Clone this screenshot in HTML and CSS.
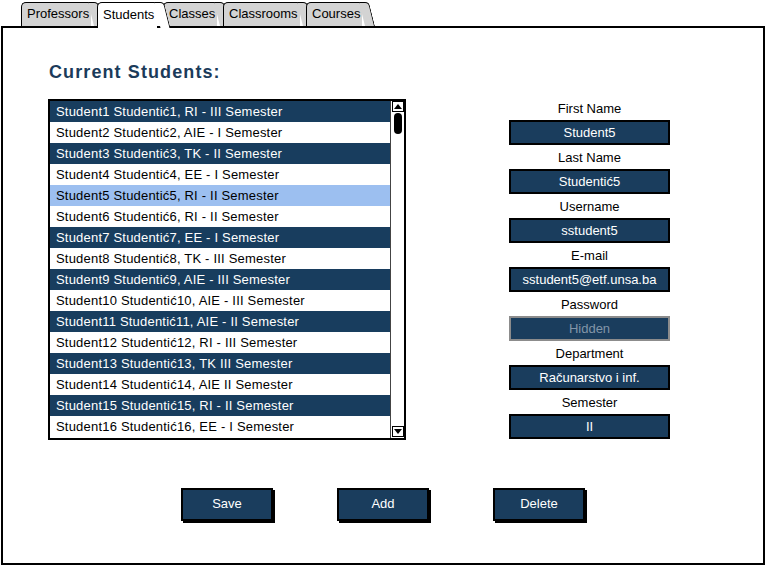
FILE: index.html
```html
<!DOCTYPE html>
<html>
<head>
<meta charset="utf-8">
<link rel="stylesheet" href="styles.css">
</head>
<body>
<div class="tabs">
  <div class="tab t-prof">Professors</div>
  <div class="tab active t-stud">Students</div>
  <div class="tab t-cls">Classes</div>
  <div class="tab t-room">Classrooms</div>
  <div class="tab t-crs">Courses</div>
</div>
<div class="panel">
  <h1 class="title">Current Students:</h1>
  <div class="main">
    <div class="list">
      <div class="rows">
        <div class="row dark">Student1 Studentić1, RI - III Semester</div>
        <div class="row">Student2 Studentić2, AIE - I Semester</div>
        <div class="row dark">Student3 Studentić3, TK - II Semester</div>
        <div class="row">Student4 Studentić4, EE - I Semester</div>
        <div class="row selected">Student5 Studentić5, RI - II Semester</div>
        <div class="row">Student6 Studentić6, RI - II Semester</div>
        <div class="row dark">Student7 Studentić7, EE - I Semester</div>
        <div class="row">Student8 Studentić8, TK - III Semester</div>
        <div class="row dark">Student9 Studentić9, AIE - III Semester</div>
        <div class="row">Student10 Studentić10, AIE - III Semester</div>
        <div class="row dark">Student11 Studentić11, AIE - II Semester</div>
        <div class="row">Student12 Studentić12, RI - III Semester</div>
        <div class="row dark">Student13 Studentić13, TK III Semester</div>
        <div class="row">Student14 Studentić14, AIE II Semester</div>
        <div class="row dark">Student15 Studentić15, RI - II Semester</div>
        <div class="row">Student16 Studentić16, EE - I Semester</div>
      </div>
      <div class="scrollbar">
        <div class="arrow up"></div>
        <div class="thumb"></div>
        <div class="track"></div>
        <div class="arrow down"></div>
      </div>
    </div>
    <div class="form">
      <div class="label">First Name</div>
      <div class="field">Student5</div>
      <div class="label">Last Name</div>
      <div class="field">Studentić5</div>
      <div class="label">Username</div>
      <div class="field">sstudent5</div>
      <div class="label">E-mail</div>
      <div class="field">sstudent5@etf.unsa.ba</div>
      <div class="label">Password</div>
      <div class="field disabled">Hidden</div>
      <div class="label">Department</div>
      <div class="field">Računarstvo i inf.</div>
      <div class="label">Semester</div>
      <div class="field">II</div>
    </div>
  </div>
  <div class="buttons">
    <div class="btn">Save</div>
    <div class="btn">Add</div>
    <div class="btn">Delete</div>
  </div>
</div>
</body>
</html>
```

FILE: styles.css
```css
* { box-sizing: border-box; }
html, body { margin: 0; padding: 0; background: #fff; }
body {
  font-family: "Liberation Sans", Arial, sans-serif;
  font-size: 13px;
  color: #000;
  width: 767px;
  height: 566px;
  overflow: hidden;
}

/* Tabs */
.tabs {
  display: flex;
  align-items: flex-start;
  height: 28px;
  padding: 2px 0 0 21px;
  margin-bottom: -2px;
  position: relative;
  z-index: 2;
}
.tab {
  position: relative;
  height: 24px;
  background: #d3d3d3;
  border-top: 1px solid #000;
  border-left: 1.5px solid #000;
  border-radius: 5px 0 0 0;
  padding: 3px 0 0 5px;
  line-height: 16px;
  white-space: nowrap;
}
.tab::after {
  content: "";
  position: absolute;
  top: -1px;
  bottom: 0;
  right: -7px;
  width: 9px;
  background: inherit;
  border-top: 1px solid #000;
  border-right: 1.5px solid #000;
  border-top-right-radius: 4px;
  transform: skewX(14deg);
  transform-origin: top left;
}
.t-prof { width: 70px; }
.t-stud { width: 60px; margin-left: 6px; }
.t-cls { width: 54px; margin-left: 6px; }
.t-room { width: 77px; margin-left: 6px; }
.t-crs { width: 56px; margin-left: 6px; }
.tab.active {
  background: #fff;
  height: 26px;
  z-index: 3;
  padding-top: 4px;
}

/* Panel */
.panel {
  margin-left: 1px;
  width: 764px;
  height: 539px;
  border: 2px solid #000;
  border-right-width: 2.5px;
  padding-top: 34px;
  position: relative;
  z-index: 1;
}
.title {
  margin: 0 0 16px 0;
  padding-left: 46px;
  font-size: 18px;
  line-height: 21px;
  font-weight: bold;
  letter-spacing: 1.1px;
  color: #1b3b5a;
}
.main {
  display: flex;
  align-items: flex-start;
  padding-left: 45px;
}

/* List */
.list {
  display: flex;
  width: 358px;
  height: 341px;
  border: 2px solid #000;
  background: #fff;
}
.rows {
  width: 340px;
  display: flex;
  flex-direction: column;
}
.row {
  height: 21px;
  line-height: 21px;
  padding-left: 6px;
  white-space: nowrap;
  overflow: hidden;
  color: #000;
  letter-spacing: 0.2px;
}
.row.dark { background: #183d5e; color: #fff; }
.row.selected { background: #9cbff0; color: #000; }
.scrollbar {
  width: 14px;
  display: flex;
  flex-direction: column;
  align-items: center;
  border-left: 1px solid #444;
  padding-bottom: 1px;
}
.arrow {
  width: 12px;
  height: 11px;
  border: 1px solid #000;
  position: relative;
  background: #fff;
}
.arrow::before {
  content: "";
  position: absolute;
  left: 1px;
  width: 0;
  height: 0;
  border-left: 4px solid transparent;
  border-right: 4px solid transparent;
}
.arrow.up::before { top: 2px; border-bottom: 5px solid #000; }
.arrow.down::before { top: 2px; border-top: 5px solid #000; }
.thumb {
  width: 8px;
  height: 21px;
  margin-top: 1px;
  background: #000;
  border-radius: 4px;
}
.track { flex: 1; }

/* Form */
.form {
  width: 161px;
  margin-left: 103px;
  padding-top: 1px;
  display: flex;
  flex-direction: column;
}
.label {
  height: 17px;
  line-height: 17px;
  text-align: center;
  font-size: 13px;
  color: #000;
}
.field {
  height: 25px;
  margin: 3px 0 4px 0;
  background: #1a3d5d;
  border: 2px solid #000;
  color: #fff;
  text-align: center;
  line-height: 21px;
  font-size: 13px;
  white-space: nowrap;
}
.field.disabled {
  border-color: #8c8c8c;
  color: #8295a8;
}

/* Buttons */
.buttons {
  display: flex;
  justify-content: center;
  gap: 64px;
  margin-top: 45px;
}
.btn {
  width: 92px;
  height: 33px;
  background: #1a3d5d;
  border: 2px solid #000;
  box-shadow: 2px 2px 0 #000;
  color: #fff;
  text-align: center;
  line-height: 27px;
  font-size: 13px;
}
```
